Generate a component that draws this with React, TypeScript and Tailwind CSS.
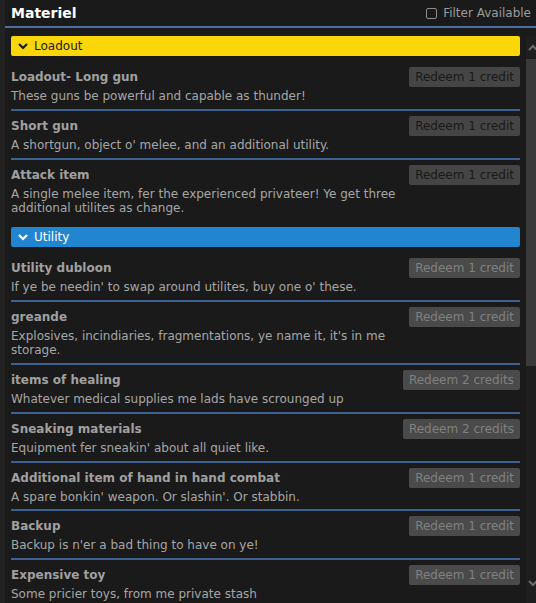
import React from "react";

type Item = {
  title: string;
  desc: string;
  cost: number;
  available: boolean;
};

type Section = {
  name: string;
  color: "yellow" | "blue";
  items: Item[];
};

const SECTIONS: Section[] = [
  {
    name: "Loadout",
    color: "yellow",
    items: [
      { title: "Loadout- Long gun", desc: "These guns be powerful and capable as thunder!", cost: 1, available: true },
      { title: "Short gun", desc: "A shortgun, object o' melee, and an additional utility.", cost: 1, available: true },
      {
        title: "Attack item",
        desc: "A single melee item, fer the experienced privateer! Ye get three additional utilites as change.",
        cost: 1,
        available: true,
      },
    ],
  },
  {
    name: "Utility",
    color: "blue",
    items: [
      { title: "Utility dubloon", desc: "If ye be needin' to swap around utilites, buy one o' these.", cost: 1, available: false },
      { title: "greande", desc: "Explosives, incindiaries, fragmentations, ye name it, it's in me storage.", cost: 1, available: false },
      { title: "items of healing", desc: "Whatever medical supplies me lads have scrounged up", cost: 2, available: false },
      { title: "Sneaking materials", desc: "Equipment fer sneakin' about all quiet like.", cost: 2, available: false },
      { title: "Additional item of hand in hand combat", desc: "A spare bonkin' weapon. Or slashin'. Or stabbin.", cost: 1, available: false },
      { title: "Backup", desc: "Backup is n'er a bad thing to have on ye!", cost: 1, available: false },
      { title: "Expensive toy", desc: "Some pricier toys, from me private stash", cost: 1, available: false },
    ],
  },
];

function Chevron({ up }: { up?: boolean }) {
  return (
    <svg width="10" height="7" viewBox="0 0 10 7">
      <polyline
        points={up ? "1,6 5,2 9,6" : "1,1 5,5 9,1"}
        fill="none"
        stroke="currentColor"
        strokeWidth="2.2"
      />
    </svg>
  );
}

function Row({ item, last }: { item: Item; last: boolean }) {
  return (
    <div className={`flex gap-2 pt-[5px] pb-[5.8px] ${last ? "" : "border-b-2 border-[#3d6190]"}`}>
      <div className="flex-1 min-w-0">
        <div className="h-[20px] leading-[20px] font-bold text-[#a0a0a0]">{item.title}</div>
        <div className="mt-[2px] leading-[14px] text-[#a6a6a6]">{item.desc}</div>
      </div>
      <div
        className={`h-[20px] leading-[20px] px-[6px] rounded-[2px] whitespace-nowrap ${
          item.available ? "bg-[#454545] text-[#191919]" : "bg-[#4a4a4a] text-[#808080]"
        }`}
      >
        Redeem {item.cost} {item.cost === 1 ? "credit" : "credits"}
      </div>
    </div>
  );
}

export default function App() {
  return (
    <div className="w-[536px] h-[603px] overflow-hidden flex bg-[#1a1a1a] font-['DejaVu_Sans',Verdana,sans-serif] text-[12px]">
      <div className="w-[5px] bg-[#222222]" />
      <div className="flex-1 flex flex-col min-w-0">
        {/* title bar */}
        <div className="h-[28px] flex items-center justify-between pl-[6px] pr-[5px] border-b-2 border-[#4a6f9e]">
          <span className="text-[14px] font-bold text-white">Materiel</span>
          <span className="flex items-center gap-[6px] text-[#9a9a9a]">
            <span className="w-[11px] h-[11px] border-[1.5px] border-[#8e8e8e] rounded-[2px]" />
            Filter Available
          </span>
        </div>

        <div className="flex flex-1 min-h-0 pt-[8px]">
          <div className="flex-1 min-w-0 px-[6px]">
            {SECTIONS.map((section) => (
              <div key={section.name} className="mb-[7px]">
                <div
                  className={`h-[20px] rounded-[2px] flex items-center gap-[6px] pl-[7px] mb-[6px] ${
                    section.color === "yellow" ? "bg-[#fbd608] text-[#1a1a1a]" : "bg-[#2185d0] text-white"
                  }`}
                >
                  <Chevron />
                  <span>{section.name}</span>
                </div>
                {section.items.map((item, idx) => (
                  <Row key={item.title} item={item} last={idx === section.items.length - 1} />
                ))}
              </div>
            ))}
          </div>

          {/* scrollbar */}
          <div className="w-[10px] bg-[#1e1e1e] flex flex-col items-center text-[#6b6b6b]">
            <div className="h-[23px] flex items-center pl-[3px]">
              <Chevron up />
            </div>
            <div className="w-full h-[307px] bg-[#3a3a3a]" />
            <div className="flex-1" />
            <div className="h-[20px] flex items-start pl-[3px] mb-[3px]">
              <Chevron />
            </div>
          </div>
        </div>
      </div>
    </div>
  );
}
